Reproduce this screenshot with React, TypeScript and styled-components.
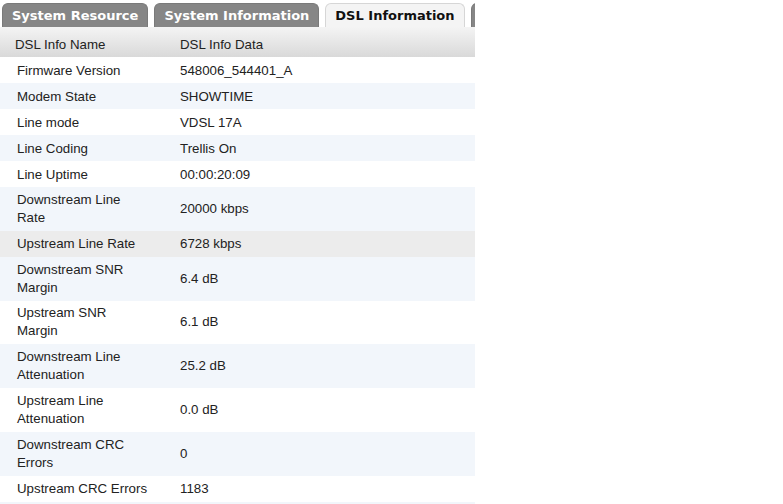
import React from "react";
import styled, { createGlobalStyle } from "styled-components";

const GlobalStyle = createGlobalStyle`
  html, body { margin: 0; padding: 0; background: #ffffff; }
  body { font-family: "Liberation Sans", Arial, sans-serif; }
`;

const Panel = styled.div`
  width: 475px;
  overflow: hidden;
`;

const TabBar = styled.div`
  display: flex;
  gap: 6px;
  padding: 3px 0 0 2px;
  height: 24px;
  white-space: nowrap;
`;

const Tab = styled.div<{ $active?: boolean }>`
  flex: none;
  display: flex;
  align-items: center;
  padding: 0 9px;
  min-width: 30px;
  height: 24px;
  box-sizing: border-box;
  border-radius: 6px 6px 0 0;
  font-family: "DejaVu Sans", Verdana, sans-serif;
  font-weight: bold;
  font-size: 13px;
  color: ${(p) => (p.$active ? "#111111" : "#ffffff")};
  background: ${(p) => (p.$active ? "#f4f4f4" : "#868686")};
  border: 1px solid ${(p) => (p.$active ? "#d6d6d6" : "#7a7a7a")};
  border-bottom: none;
`;

const Table = styled.div`
  display: flex;
  flex-direction: column;
  font-size: 13.3px;
  color: #222222;
`;

const HeaderRow = styled.div`
  display: grid;
  grid-template-columns: 180px 1fr;
  align-items: center;
  height: 30px;
  box-sizing: border-box;
  padding-top: 5px;
  background: linear-gradient(#f4f4f4, #d9d9d9);
`;

const HeadCell = styled.div<{ $first?: boolean }>`
  padding-left: ${(p) => (p.$first ? "15px" : "0")};
`;

const Row = styled.div<{ $tone: "white" | "blue" | "hover"; $tall?: boolean }>`
  display: grid;
  grid-template-columns: 180px 1fr;
  align-items: center;
  min-height: ${(p) => (p.$tall ? "43.8px" : "26px")};
  background: ${(p) =>
    p.$tone === "blue" ? "#f2f6fb" : p.$tone === "hover" ? "#ececec" : "#ffffff"};
  line-height: 18px;
  padding-top: ${(p) => (p.$tall ? "0" : "1px")};
  box-sizing: border-box;
`;

const NameCell = styled.div`
  padding-left: 17px;
  padding-right: 31px;
`;

const DataCell = styled.div``;

const rows: { name: string; value: string; tall?: boolean }[] = [
  { name: "Firmware Version", value: "548006_544401_A" },
  { name: "Modem State", value: "SHOWTIME" },
  { name: "Line mode", value: "VDSL 17A" },
  { name: "Line Coding", value: "Trellis On" },
  { name: "Line Uptime", value: "00:00:20:09" },
  { name: "Downstream Line Rate", value: "20000 kbps", tall: true },
  { name: "Upstream Line Rate", value: "6728 kbps" },
  { name: "Downstream SNR Margin", value: "6.4 dB", tall: true },
  { name: "Upstream SNR Margin", value: "6.1 dB", tall: true },
  { name: "Downstream Line Attenuation", value: "25.2 dB", tall: true },
  { name: "Upstream Line Attenuation", value: "0.0 dB", tall: true },
  { name: "Downstream CRC Errors", value: "0", tall: true },
  { name: "Upstream CRC Errors", value: "1183" },
  { name: "", value: "" },
];

const HOVERED = 6;

export default function App() {
  return (
    <>
      <GlobalStyle />
      <Panel>
        <TabBar>
          <Tab>System Resource</Tab>
          <Tab>System Information</Tab>
          <Tab $active>DSL Information</Tab>
          <Tab />
        </TabBar>
        <Table>
          <HeaderRow>
            <HeadCell $first>DSL Info Name</HeadCell>
            <HeadCell>DSL Info Data</HeadCell>
          </HeaderRow>
          {rows.map((r, i) => (
            <Row
              key={i}
              $tall={r.tall}
              $tone={i === HOVERED ? "hover" : i % 2 ? "blue" : "white"}
            >
              <NameCell>{r.name}</NameCell>
              <DataCell>{r.value}</DataCell>
            </Row>
          ))}
        </Table>
      </Panel>
    </>
  );
}
